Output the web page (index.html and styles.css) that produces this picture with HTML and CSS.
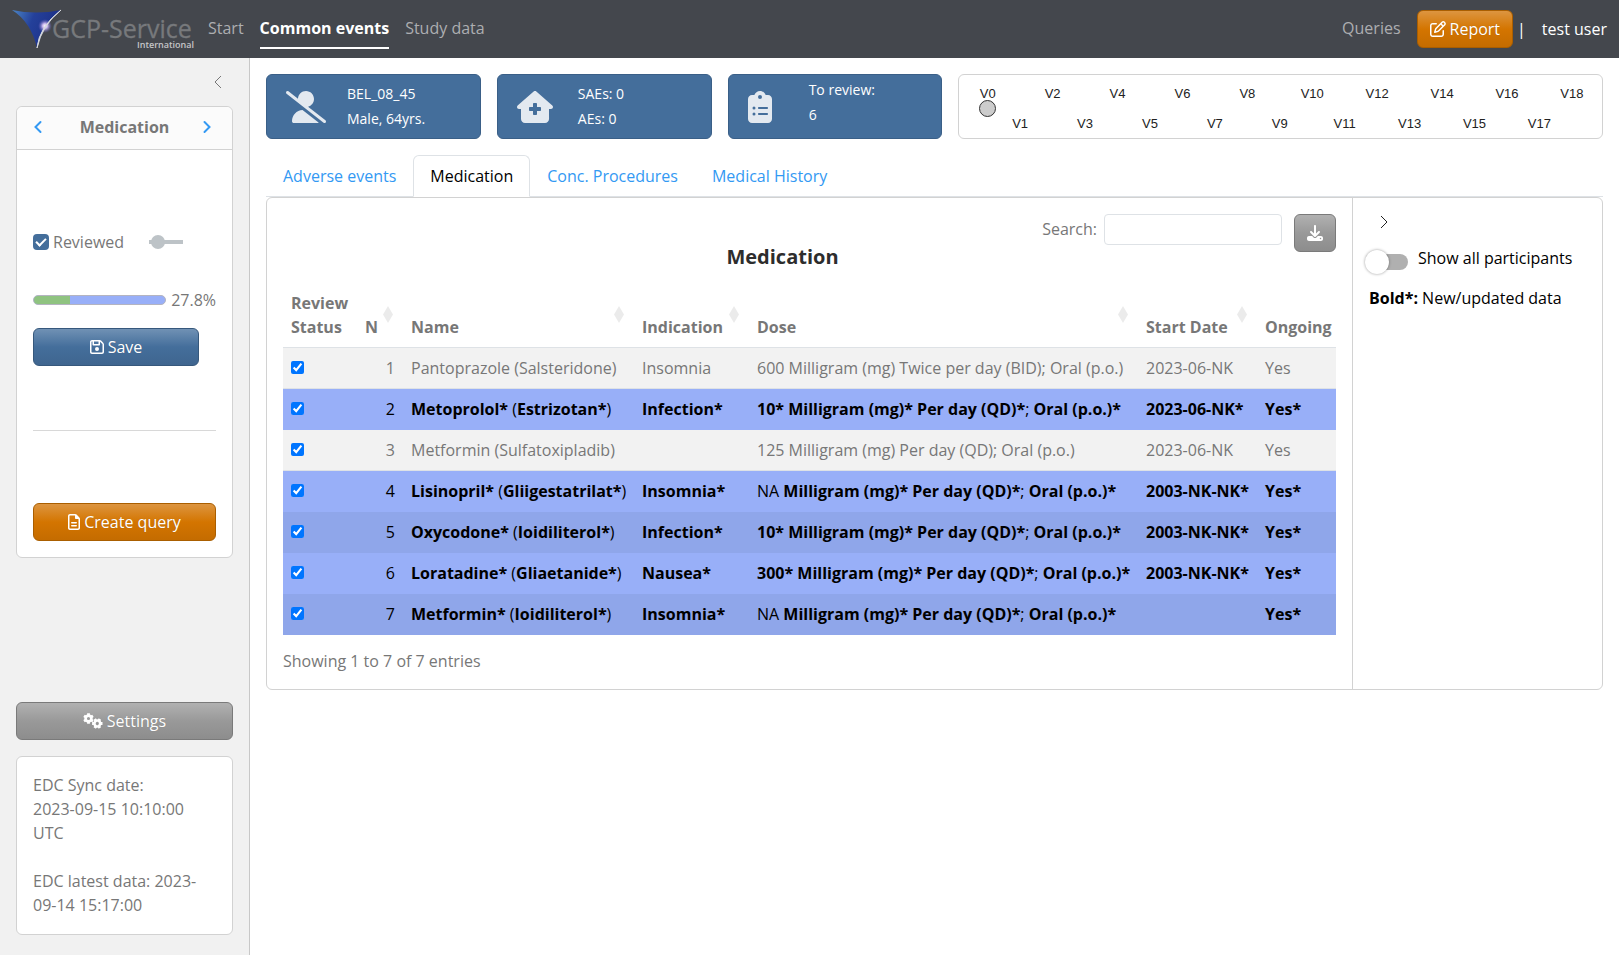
FILE: index.html
```html
<!DOCTYPE html>
<html lang="en">
<head>
<meta charset="utf-8">
<title>Common events</title>
<link rel="stylesheet" href="styles.css">
</head>
<body>
<header class="navbar">
  <svg class="logo" width="182" height="46" viewBox="0 0 182 46" role="img" aria-label="GCP-Service International">
    <defs>
      <linearGradient id="sail" x1="0" y1="0" x2="1" y2="0.3">
        <stop offset="0" stop-color="#4c86c6"/><stop offset="0.45" stop-color="#24409a"/><stop offset="1" stop-color="#1c2f86"/>
      </linearGradient>
      <radialGradient id="star"><stop offset="0" stop-color="#fff"/><stop offset="0.35" stop-color="#c9b8ec"/><stop offset="1" stop-color="#5a55b8" stop-opacity="0"/></radialGradient>
    </defs>
    <path d="M0 4Q24 9 49 4Q30 19 25 42Q19 16 0 4Z" fill="url(#sail)"/>
    <circle cx="33" cy="20" r="7" fill="url(#star)"/>
    <path d="M49 4Q30 19 25 42Q27 21 49 4Z" fill="#e4e6ea" stroke="#d6d9de" stroke-width="1"/>
    <text x="40" y="32" class="logo-name">GCP-Service</text>
    <text x="125" y="42" class="logo-sub">International</text>
  </svg>
  <nav class="nav-links">
    <a href="#start">Start</a>
    <a href="#common" class="active">Common events</a>
    <a href="#study">Study data</a>
  </nav>
  <div class="nav-right">
    <a href="#queries" class="queries">Queries</a>
    <button class="btn btn-orange" type="button">
      <svg class="icon" viewBox="0 0 512 512"><path d="M441 58.9L453.1 71c9.4 9.4 9.4 24.6 0 33.9L424 134.1 377.9 88 407 58.9c9.4-9.4 24.6-9.4 33.9 0zM209.8 256.2L344 121.9 390.1 168 255.8 302.2c-2.9 2.9-6.5 5-10.4 6.1l-58.5 16.7 16.7-58.5c1.1-3.9 3.2-7.5 6.1-10.4zM373.1 25L175.8 222.2c-8.7 8.7-15 19.4-18.3 31.1l-28.6 100c-2.4 8.4-.1 17.4 6.1 23.6s15.2 8.5 23.6 6.1l100-28.6c11.8-3.4 22.5-9.7 31.1-18.3L487 138.9c28.1-28.1 28.1-73.7 0-101.8L474.9 25C446.8-3.1 401.2-3.1 373.1 25zM88 64C39.4 64 0 103.4 0 152V424c0 48.6 39.4 88 88 88H360c48.6 0 88-39.4 88-88V312c0-13.3-10.7-24-24-24s-24 10.7-24 24V424c0 22.1-17.9 40-40 40H88c-22.1 0-40-17.9-40-40V152c0-22.1 17.9-40 40-40H200c13.3 0 24-10.7 24-24s-10.7-24-24-24H88z"/></svg>
      Report
    </button>
    <span class="divider">|</span>
    <span class="user">test user</span>
  </div>
</header>

<div class="layout">
  <aside class="sidebar">
    <button class="collapse" type="button" aria-label="Collapse sidebar">
      <svg width="16" height="16" viewBox="0 0 16 16"><path d="M11 2L5 8l6 6"/></svg>
    </button>
    <section class="card nav-card">
      <div class="card-head">
        <button class="arrow" type="button" aria-label="Previous"><svg width="10" height="14" viewBox="0 0 10 14"><path d="M7.500 2L2.500 7l5 5"/></svg></button>
        <strong>Medication</strong>
        <button class="arrow" type="button" aria-label="Next"><svg width="10" height="14" viewBox="0 0 10 14"><path d="M2.500 2l5 5-5 5"/></svg></button>
      </div>
      <div class="card-content">
        <div class="review-row">
          <label class="reviewed"><input type="checkbox" class="tick" checked>Reviewed</label>
          <input type="checkbox" class="slim-switch" aria-label="Review all">
        </div>
        <div class="progress-row">
          <div class="progress" role="progressbar" aria-label="Reviewed" aria-valuenow="27.8"><div class="progress-fill" style="width:27.8%"></div></div>
          <span>27.8%</span>
        </div>
        <button class="btn btn-blue save" type="button">
          <svg class="icon icon-save" viewBox="0 0 448 512"><path d="M48 96V416c0 8.800 7.200 16 16 16H384c8.800 0 16-7.200 16-16V170.500c0-4.200-1.700-8.300-4.700-11.300l33.900-33.900c12 12 18.700 28.300 18.700 45.300V416c0 35.300-28.700 64-64 64H64c-35.300 0-64-28.700-64-64V96C0 60.700 28.700 32 64 32H309.500c17 0 33.300 6.700 45.300 18.700l74.500 74.500-33.900 33.900L320.800 84.700c-.3-.3-.5-.5-.8-.8V184c0 13.300-10.700 24-24 24H104c-13.300 0-24-10.700-24-24V80H64c-8.800 0-16 7.200-16 16zm80-16v80H272V80H128zm32 240a64 64 0 1 1 128 0 64 64 0 1 1 -128 0z"/></svg>
          Save
        </button>
        <hr>
        <button class="btn btn-orange" type="button">
          <svg class="icon icon-file" viewBox="0 0 384 512"><path d="M64 464c-8.800 0-16-7.200-16-16V64c0-8.800 7.200-16 16-16H224v80c0 17.700 14.300 32 32 32h80V448c0 8.800-7.200 16-16 16H64zM64 0C28.700 0 0 28.700 0 64V448c0 35.300 28.700 64 64 64H320c35.300 0 64-28.700 64-64V154.500c0-17-6.700-33.300-18.700-45.300L274.700 18.700C262.700 6.700 246.500 0 229.500 0H64zm56 256c-13.300 0-24 10.700-24 24s10.700 24 24 24H264c13.300 0 24-10.700 24-24s-10.700-24-24-24H120zm0 96c-13.300 0-24 10.700-24 24s10.700 24 24 24H264c13.300 0 24-10.700 24-24s-10.700-24-24-24H120z"/></svg>
          Create query
        </button>
      </div>
    </section>
    <button class="btn btn-gray settings" type="button">
      <svg class="icon icon-gears" viewBox="0 0 20 16">
        <g stroke="#fff" fill="none"><circle cx="5.500" cy="5.500" r="2.900" stroke-width="2.600"/><path stroke-width="2.800" d="M5.500 .3v1.800M5.500 8.900v1.800M1 2.900l1.600.9M8.400 7.200l1.600.9M1 8.100l1.600-.9M8.400 3.800l1.600-.9"/></g>
        <g stroke="#fff" fill="none" transform="translate(14.300 10.500) rotate(30) translate(-5.500 -5.500)"><circle cx="5.500" cy="5.500" r="2.900" stroke-width="2.600"/><path stroke-width="2.800" d="M5.500 .3v1.800M5.500 8.900v1.800M1 2.900l1.600.9M8.400 7.200l1.600.9M1 8.100l1.600-.9M8.400 3.800l1.600-.9"/></g>
      </svg>
      Settings
    </button>
    <section class="card info-card">
      <p>EDC Sync date:<br>2023-09-15 10:10:00 UTC</p>
      <p>EDC latest data: 2023-09-14 15:17:00</p>
    </section>
  </aside>

  <main class="main">
    <div class="summary">
      <div class="box">
        <svg width="40" height="32" viewBox="0 0 640 512"><path d="M38.800 5.100C28.400-3.100 13.300-1.200 5.100 9.200S-1.200 34.700 9.200 42.900l592 464c10.400 8.200 25.500 6.300 33.700-4.100s6.300-25.500-4.100-33.700L353.300 251.600C407.900 237 448 187.200 448 128C448 57.300 390.700 0 320 0C250.200 0 193.500 55.800 192 125.200L38.800 5.100zM264.300 304.300C170.500 309.400 96 387.200 96 482.300c0 16.400 13.300 29.700 29.700 29.700H514.300c3.900 0 7.600-.7 11-2.100l-261-205.600z"/></svg>
        <div class="box-text"><div>BEL_08_45</div><div>Male, 64yrs.</div></div>
      </div>
      <div class="box">
        <svg width="36" height="32" viewBox="0 0 576 512"><path fill-rule="evenodd" d="M543.800 287.600c17 0 32-14 32-32.100c1-9-3-17-11-24L309.500 7c-6-5-14-7-21-7s-15 1-22 8L10 231.500c-7 7-10 15-10 24c0 18 14 32.100 32 32.100h32V448c0 35.300 28.700 64 64 64H448.500c35.500 0 64.200-28.800 64-64.300l-.7-160.200h32zM256 208c0-8.800 7.200-16 16-16h32c8.800 0 16 7.200 16 16v48h48c8.800 0 16 7.200 16 16v32c0 8.800-7.200 16-16 16H320v48c0 8.800-7.200 16-16 16H272c-8.800 0-16-7.200-16-16V320H208c-8.800 0-16-7.200-16-16V272c0-8.800 7.200-16 16-16h48V208z"/></svg>
        <div class="box-text"><div>SAEs: 0</div><div>AEs: 0</div></div>
      </div>
      <div class="box">
        <svg width="24" height="32" viewBox="0 0 384 512"><path d="M192 0c-41.800 0-77.400 26.700-90.500 64H64C28.700 64 0 92.700 0 128V448c0 35.300 28.700 64 64 64H320c35.300 0 64-28.700 64-64V128c0-35.300-28.700-64-64-64H282.500C269.400 26.700 233.800 0 192 0zm0 64a32 32 0 1 1 0 64 32 32 0 1 1 0-64zM72 272a24 24 0 1 1 48 0 24 24 0 1 1 -48 0zm104-16H304c8.800 0 16 7.200 16 16s-7.200 16-16 16H176c-8.800 0-16-7.200-16-16s7.200-16 16-16zM72 368a24 24 0 1 1 48 0 24 24 0 1 1 -48 0zm88 0c0-8.800 7.200-16 16-16H304c8.800 0 16 7.200 16 16s-7.200 16-16 16H176c-8.800 0-16-7.200-16-16z"/></svg>
        <div class="box-text raised"><div>To review:</div><div>6</div></div>
      </div>
      <ol class="timeline">
        <li class="current">V0</li><li>V1</li><li>V2</li><li>V3</li><li>V4</li><li>V5</li><li>V6</li><li>V7</li><li>V8</li><li>V9</li><li>V10</li><li>V11</li><li>V12</li><li>V13</li><li>V14</li><li>V15</li><li>V16</li><li>V17</li><li>V18</li>
      </ol>
    </div>

    <nav class="tabs">
      <a href="#ae">Adverse events</a>
      <a href="#med" class="active">Medication</a>
      <a href="#proc">Conc. Procedures</a>
      <a href="#hist">Medical History</a>
    </nav>

    <div class="panel">
      <section class="panel-main">
        <div class="tools">
          <label for="search">Search:</label>
          <input id="search" class="search" type="search">
          <button class="btn btn-gray download" type="button" aria-label="Download">
            <svg class="icon" viewBox="0 0 512 512"><path d="M288 32c0-17.700-14.300-32-32-32s-32 14.300-32 32V274.700l-73.400-73.400c-12.500-12.500-32.800-12.500-45.300 0s-12.500 32.800 0 45.300l128 128c12.500 12.500 32.800 12.500 45.300 0l128-128c12.500-12.500 12.500-32.800 0-45.300s-32.800-12.500-45.300 0L288 274.700V32zM64 352c-35.300 0-64 28.700-64 64v32c0 35.300 28.700 64 64 64H448c35.300 0 64-28.700 64-64V416c0-35.300-28.700-64-64-64H346.500l-45.300 45.300c-25 25-65.500 25-90.500 0L165.500 352H64zm368 56a24 24 0 1 1 0 48 24 24 0 1 1 0-48z"/></svg>
          </button>
        </div>
        <table class="data">
          <caption>Medication</caption>
          <colgroup><col class="c-status"><col class="c-n"><col class="c-name"><col class="c-ind"><col class="c-dose"><col class="c-start"><col></colgroup>
          <thead>
            <tr><th>Review Status</th><th class="sort">N</th><th class="sort">Name</th><th class="sort">Indication</th><th class="sort">Dose</th><th class="sort">Start Date</th><th>Ongoing</th></tr>
          </thead>
          <tbody>
            <tr><td><input type="checkbox" checked aria-label="Row 1"></td><td class="num">1</td><td>Pantoprazole (Salsteridone)</td><td>Insomnia</td><td>600 Milligram (mg) Twice per day (BID); Oral (p.o.)</td><td>2023-06-NK</td><td>Yes</td></tr>
            <tr class="new"><td><input type="checkbox" checked aria-label="Row 2"></td><td class="num">2</td><td><b>Metoprolol*</b> (<b>Estrizotan*</b>)</td><td><b>Infection*</b></td><td><b>10*</b> <b>Milligram (mg)*</b> <b>Per day (QD)*</b>; <b>Oral (p.o.)*</b></td><td><b>2023-06-NK*</b></td><td><b>Yes*</b></td></tr>
            <tr><td><input type="checkbox" checked aria-label="Row 3"></td><td class="num">3</td><td>Metformin (Sulfatoxipladib)</td><td></td><td>125 Milligram (mg) Per day (QD); Oral (p.o.)</td><td>2023-06-NK</td><td>Yes</td></tr>
            <tr class="new"><td><input type="checkbox" checked aria-label="Row 4"></td><td class="num">4</td><td><b>Lisinopril*</b> (<b>Gliigestatrilat*</b>)</td><td><b>Insomnia*</b></td><td>NA <b>Milligram (mg)*</b> <b>Per day (QD)*</b>; <b>Oral (p.o.)*</b></td><td><b>2003-NK-NK*</b></td><td><b>Yes*</b></td></tr>
            <tr class="new"><td><input type="checkbox" checked aria-label="Row 5"></td><td class="num">5</td><td><b>Oxycodone*</b> (<b>Ioidiliterol*</b>)</td><td><b>Infection*</b></td><td><b>10*</b> <b>Milligram (mg)*</b> <b>Per day (QD)*</b>; <b>Oral (p.o.)*</b></td><td><b>2003-NK-NK*</b></td><td><b>Yes*</b></td></tr>
            <tr class="new"><td><input type="checkbox" checked aria-label="Row 6"></td><td class="num">6</td><td><b>Loratadine*</b> (<b>Gliaetanide*</b>)</td><td><b>Nausea*</b></td><td><b>300*</b> <b>Milligram (mg)*</b> <b>Per day (QD)*</b>; <b>Oral (p.o.)*</b></td><td><b>2003-NK-NK*</b></td><td><b>Yes*</b></td></tr>
            <tr class="new"><td><input type="checkbox" checked aria-label="Row 7"></td><td class="num">7</td><td><b>Metformin*</b> (<b>Ioidiliterol*</b>)</td><td><b>Insomnia*</b></td><td>NA <b>Milligram (mg)*</b> <b>Per day (QD)*</b>; <b>Oral (p.o.)*</b></td><td></td><td><b>Yes*</b></td></tr>
          </tbody>
        </table>
        <p class="entries">Showing 1 to 7 of 7 entries</p>
      </section>
      <aside class="panel-side">
        <button class="expand" type="button" aria-label="Collapse panel">
          <svg width="16" height="16" viewBox="0 0 16 16"><path d="M5 2l6 6-6 6"/></svg>
        </button>
        <label class="switch-row"><input type="checkbox" class="switch"><span>Show all participants</span></label>
        <p class="legend"><b>Bold*:</b> New/updated data</p>
      </aside>
    </div>
  </main>
</div>
</body>
</html>
```
FILE: styles.css
```css
* { box-sizing: border-box; }

body {
  margin: 0;
  display: flex;
  flex-direction: column;
  min-height: 100vh;
  background: #fff;
  color: #777;
  font: 16px/24px "Open Sans", "Noto Sans", sans-serif;
}

p { margin: 0; }
a { text-decoration: none; }
button, input { font: inherit; margin: 0; }
button { cursor: pointer; }

/* Top bar */
.navbar {
  display: flex;
  align-items: center;
  height: 58px;
  padding: 0 12px;
  background: #44474d;
}
.logo { flex: none; }
.logo-name { font: 25px "Open Sans", sans-serif; fill: #77797c; stroke: #77797c; stroke-width: 0.3; }
.logo-sub { font: 600 9px "Open Sans", sans-serif; fill: #c4c5c8; }
.nav-links { display: flex; gap: 16px; margin-left: 14px; }
.nav-links a { padding: 7px 0; border-bottom: 2px solid transparent; color: #adaeb1; }
.nav-links a.active { color: #fff; font-weight: 700; border-color: #fff; }
.nav-right { display: flex; align-items: center; margin-left: auto; color: #fff; }
.queries { margin-right: 16px; padding-bottom: 2px; color: #adaeb1; }
.divider { margin: 0 16px 0 4px; }

/* Buttons */
.btn {
  display: flex;
  align-items: center;
  justify-content: center;
  gap: 4px;
  height: 38px;
  padding: 0 12px;
  border: 1px solid;
  border-radius: 6px;
  color: #fff;
  text-shadow: 0 0 1px rgba(0, 0, 0, 0.2);
}
.btn-orange { background: linear-gradient(#dd9540, #d47500 50%, #c46c00); border-color: #aa5e00; }
.btn-blue { background: linear-gradient(#7091b4, #446e9b 50%, #3f658f); border-color: #36587c; }
.btn-gray { background: linear-gradient(#b1b1b1, #999 50%, #8d8d8d); border-color: #7a7a7a; }
.icon { width: 16px; height: 16px; flex: none; fill: currentColor; }
.icon-save { width: 14px; }
.icon-file { width: 12px; }
.icon-gears { width: 20px; }

/* Sidebar */
.layout { display: flex; flex: 1; }
.sidebar {
  display: flex;
  flex-direction: column;
  flex: none;
  width: 250px;
  padding: 16px 16px 20px;
  border-right: 1px solid #c8c8c8;
  background: #f1f1f1;
}
.collapse, .expand, .arrow { display: flex; padding: 0; border: 0; background: none; }
.collapse svg, .expand svg { fill: none; stroke: #777; stroke-width: 1; }
.expand svg { stroke: #222; }
.collapse { align-self: flex-end; margin: 0 7px 16px 0; }
.card { border: 1px solid #d2d2d2; border-radius: 6px; background: #fff; }
.card-head {
  display: flex;
  align-items: center;
  justify-content: space-between;
  padding: 8px 20px 10px 16px;
  border-bottom: 1px solid #d2d2d2;
  border-radius: 6px 6px 0 0;
  background: #fbfbfb;
}
.card-head strong { margin-left: 4px; }
.arrow svg { fill: none; stroke: #3399f3; stroke-width: 2; stroke-linecap: round; }
.card-content { display: flex; flex-direction: column; padding: 80px 16px 16px; }
.review-row { display: flex; align-items: center; gap: 25px; }
.reviewed { display: flex; align-items: center; gap: 4px; }
.tick {
  appearance: none;
  width: 16px;
  height: 16px;
  border-radius: 4px;
  background: #446e9b;
  display: grid;
  place-items: center;
}
.tick:checked::before {
  content: "";
  width: 8px;
  height: 4px;
  margin-bottom: 2px;
  border: solid #fff;
  border-width: 0 0 2px 2px;
  transform: rotate(-45deg);
}
.slim-switch {
  appearance: none;
  display: flex;
  align-items: center;
  width: 34px;
  height: 14px;
  background: linear-gradient(#bdc3c7, #bdc3c7) center / 100% 4px no-repeat;
  border-radius: 2px;
}
.slim-switch::before { content: ""; width: 14px; height: 14px; margin-left: 2px; border-radius: 50%; background: #bdc3c7; }
.progress-row { display: flex; align-items: center; gap: 5px; margin-top: 34px; }
.progress { flex: 1; height: 10px; overflow: hidden; border: 1px solid #b4b4c0; border-radius: 5px; background: #98aff8; }
.progress-fill { height: 100%; background: #8fc380; }
.save { width: 166px; margin-top: 16px; }
hr { width: 100%; height: 1px; margin: 64px 0 72px; border: 0; background: #d8d8d8; }
.settings { margin: auto 0 16px; }
.info-card { display: grid; gap: 24px; padding: 16px 16px 17px; }

/* Main column */
.main { flex: 1; min-width: 0; padding: 16px; }
.summary { display: grid; grid-template-columns: 1fr 1fr 1fr 3fr; gap: 16px; }
.box {
  display: grid;
  grid-template-columns: 61px 1fr;
  align-items: center;
  min-height: 65px;
  padding: 0 19px;
  border: 1px solid #3a5f87;
  border-radius: 6px;
  background: #446e9b;
  color: #fff;
  font-size: 14px;
  line-height: 25px;
}
.box svg { fill: #e3e9f0; }
.box-text { padding-bottom: 2px; }
.box-text.raised { padding-bottom: 10px; }
.timeline {
  display: flex;
  margin: 0;
  padding: 11px 14px 6px 12px;
  border: 1px solid #d2d2d2;
  border-radius: 6px;
  list-style: none;
  color: #222;
  font: 13px/16px "Liberation Sans", Arial, sans-serif;
}
.timeline li { display: flex; flex-direction: column; align-items: center; flex: 1 1 0; min-width: 0; }
.timeline li:nth-child(even) { justify-content: flex-end; }
.current::after { content: ""; width: 15px; height: 15px; margin-top: -2px; border: 1px solid #333; border-radius: 50%; background: #ccc; }

.tabs { display: flex; margin-top: 16px; border-bottom: 1px solid #dee2e6; }
.tabs a { margin-bottom: -1px; padding: 8px 16px; border: 1px solid transparent; border-radius: 6px 6px 0 0; color: #3399f3; }
.tabs a.active { border-color: #dee2e6 #dee2e6 #fff; background: #fff; color: #000; }

.panel { display: flex; border: 1px solid #d2d2d2; border-radius: 6px; }
.panel-main { flex: 1; min-width: 0; padding: 16px; }
.panel-side { flex: none; width: 250px; padding: 16px; border-left: 1px solid #d2d2d2; color: #000; }

.tools { display: flex; align-items: flex-start; justify-content: flex-end; height: 31px; }
.tools label { margin: 3px 7px 0 0; }
.search { width: 178px; height: 31px; padding: 4px 8px; border: 1px solid #dee2e6; border-radius: 4px; background: #fff; }
.download { margin-left: 12px; }

.data { width: 100%; table-layout: fixed; border-collapse: collapse; }
.data caption { padding: 0 54px 14px 0; color: #2d2d2d; font-size: 20px; font-weight: 700; line-height: 24px; }
.c-status { width: 74px; }
.c-n { width: 46px; }
.c-name { width: 231px; }
.c-ind { width: 115px; }
.c-dose { width: 389px; }
.c-start { width: 119px; }
.data th, .data td { padding: 8px; border-bottom: 1px solid #dee2e6; text-align: left; white-space: nowrap; }
.data th { position: relative; vertical-align: bottom; }
.data th:first-child { white-space: normal; }
.data .num { text-align: right; }
.sort::after {
  content: "";
  position: absolute;
  right: 10px;
  bottom: 24px;
  width: 10px;
  height: 17px;
  background: #ebebeb;
  clip-path: polygon(50% 0, 100% 50%, 50% 100%, 0 50%);
}
.data td input { display: block; width: 13px; height: 13px; margin-bottom: 2px; accent-color: #0075ff; }
.data tbody tr:nth-child(odd) { background: #f2f2f2; }
.data tbody tr.new { background: #98aff8; color: #000; }
.data tbody tr.new:nth-child(odd) { background: #8fa6ea; }
.data tbody tr.new td { border-bottom-color: transparent; }
.entries { margin-top: 14px; }

.expand { margin-left: 7px; }
.switch-row { display: flex; align-items: flex-start; gap: 10px; margin: 16px 0 16px -4px; white-space: nowrap; }
.switch {
  appearance: none;
  flex: none;
  display: flex;
  align-items: center;
  width: 43px;
  height: 16px;
  margin-top: 8px;
  border-radius: 8px;
  background: linear-gradient(90deg, transparent 12px, #b0b0b0 12px);
}
.switch::before { content: ""; width: 24px; height: 24px; border-radius: 50%; background: #fff; box-shadow: 0 0 3px rgba(0, 0, 0, 0.4); }
```
